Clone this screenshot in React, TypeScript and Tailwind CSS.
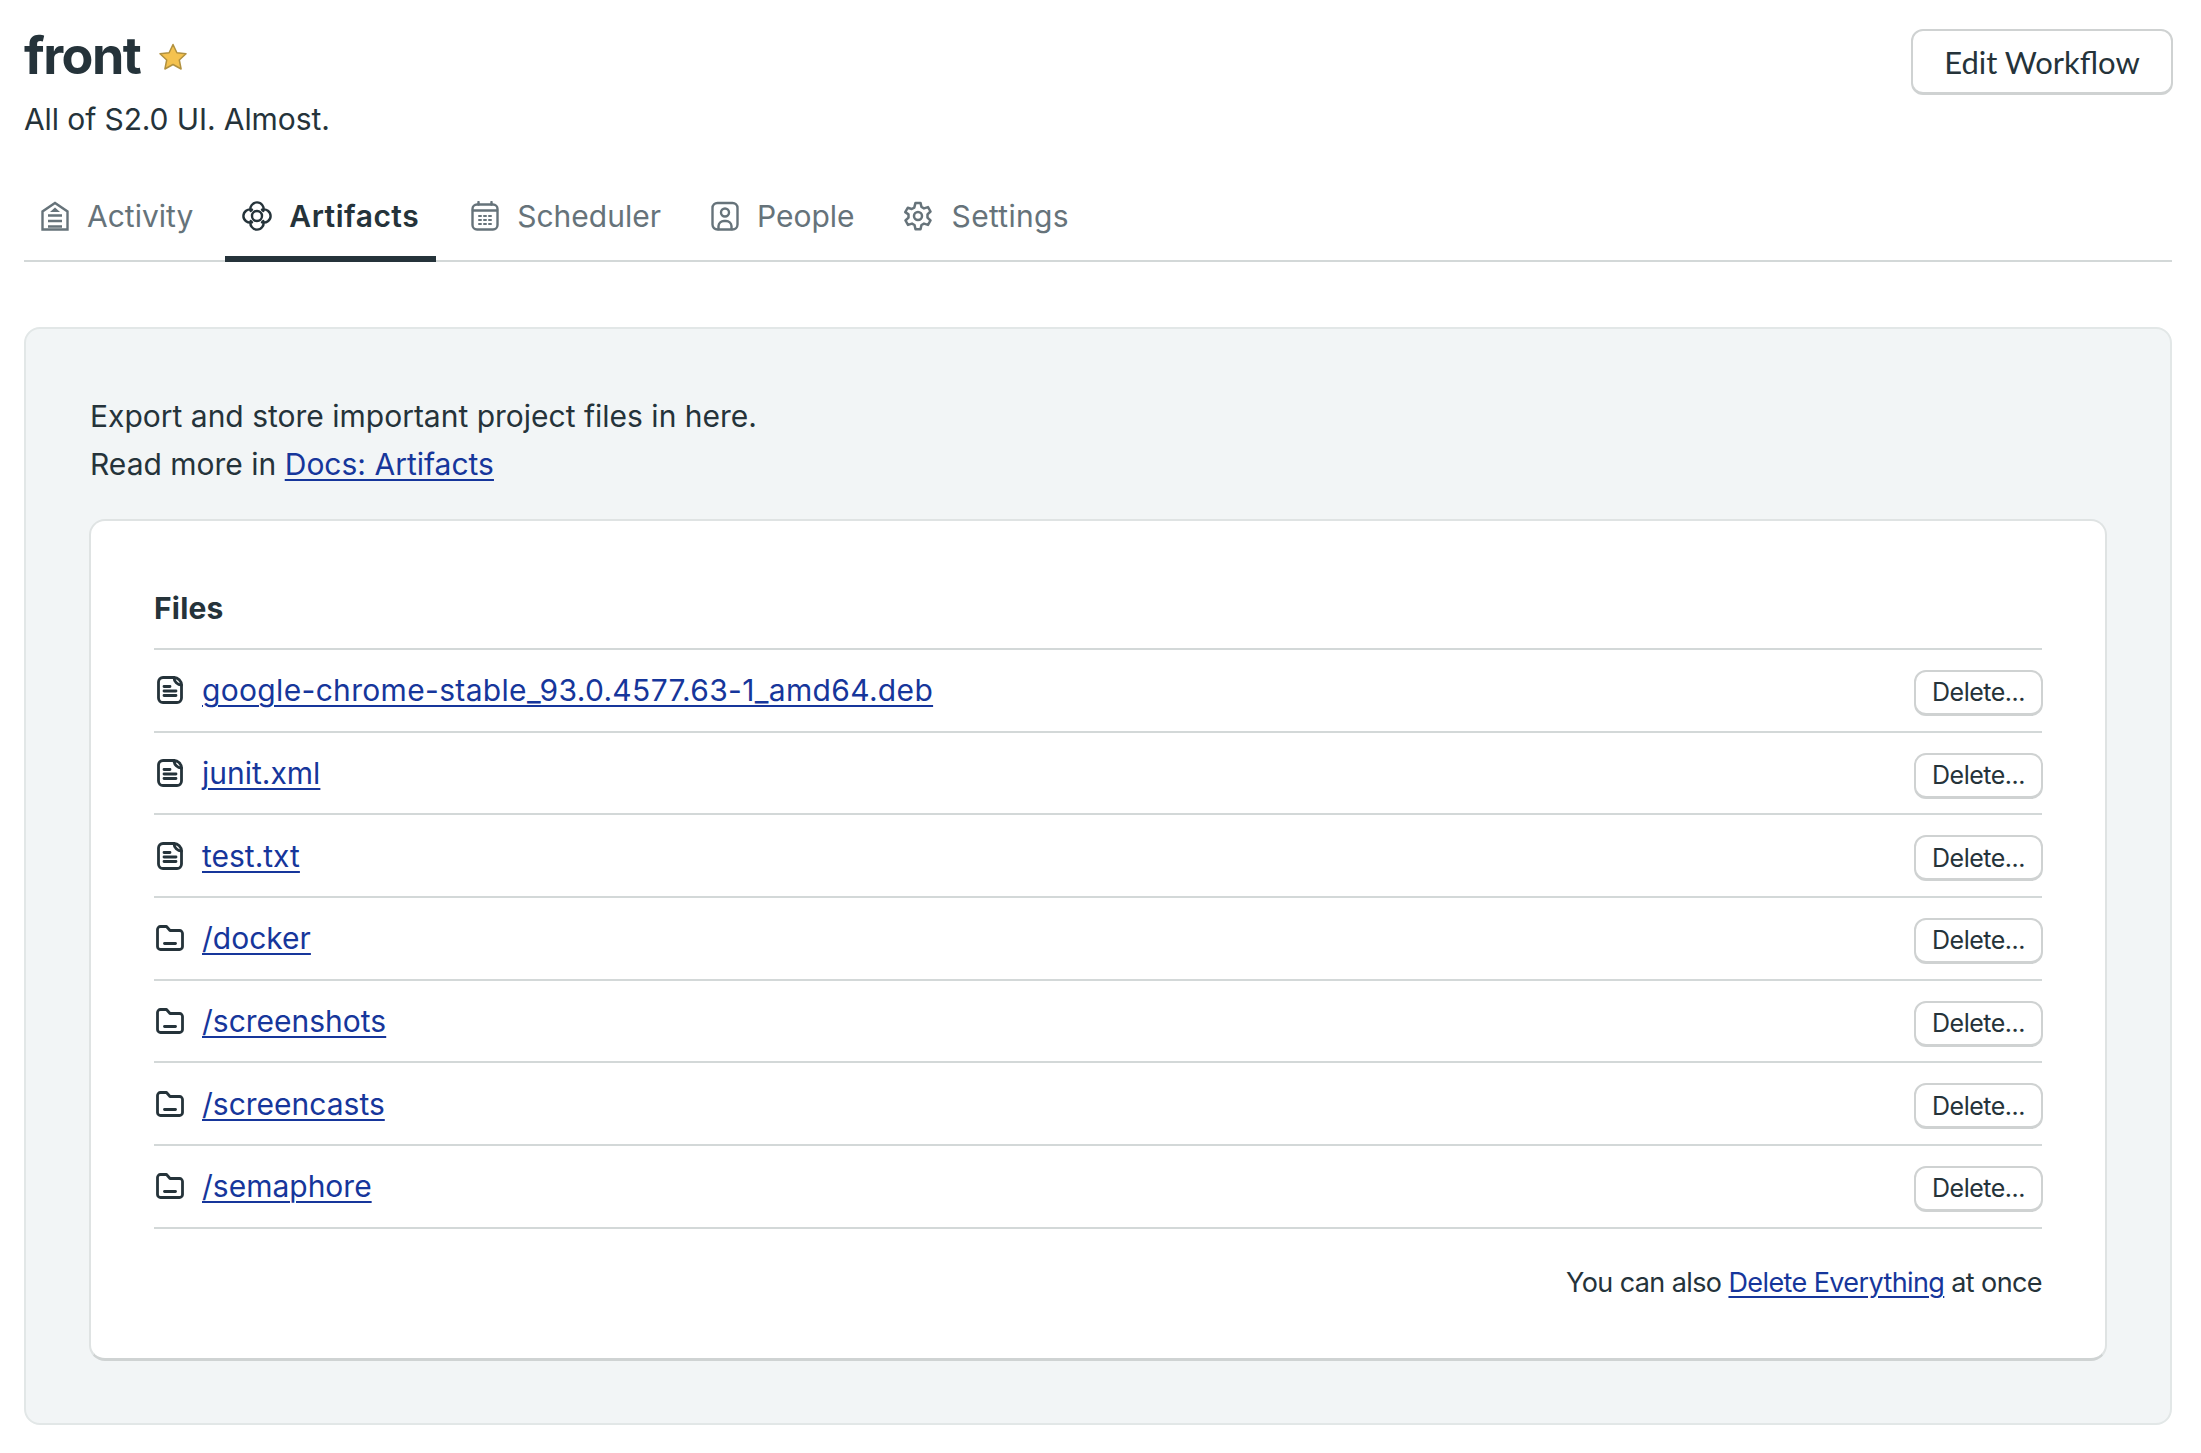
import { FC, ReactNode } from 'react';

const stroke = {
  fill: 'none',
  stroke: 'currentColor',
  strokeWidth: 2.4,
  strokeLinecap: 'round' as const,
  strokeLinejoin: 'round' as const,
};

const ActivityIcon = () => (
  <svg width="28" height="30" viewBox="0 0 28 30" {...stroke} strokeLinecap="butt" strokeLinejoin="miter">
    <path d="M1.500 28.500V10.500L14 2l12.500 8.500V28.500Z" />
    <path d="M7 14.500h14M7 20h14M7 25.500h14" />
    <path d="M14 6.500l5 4.500h-10Z" fill="currentColor" stroke="none" />
  </svg>
);

const ArtifactsIcon = () => (
  <svg width="30" height="30" viewBox="0 0 30 30" {...stroke}>
    <circle cx="15" cy="15" r="5" />
    <path d="M8.710 10a6.600 6.600 0 1 1 12.580 0M20 8.710a6.600 6.600 0 1 1 0 12.580M21.290 20a6.600 6.600 0 1 1-12.580 0M10 21.290a6.600 6.600 0 1 1 0-12.580" />
  </svg>
);

const SchedulerIcon = () => (
  <svg width="28" height="30" viewBox="0 0 28 30" {...stroke}>
    <rect x="1.500" y="3.500" width="25" height="25" rx="4.500" />
    <path d="M2 9.500h24M7.500 1v2.500M20.500 1v2.500" />
    <path d="M8 15h2M13 15h2M18 15h2M8 19h2M13 19h2M18 19h2M8 23h2M13 23h2M18 23h2" strokeWidth="2" />
  </svg>
);

const PeopleIcon = () => (
  <svg width="28" height="30" viewBox="0 0 28 30" {...stroke}>
    <rect x="1.500" y="2" width="25" height="26.500" rx="5" />
    <circle cx="14" cy="11.500" r="4" />
    <path d="M7.500 28v-3a5.500 5.500 0 0 1 5.500-5h2a5.500 5.500 0 0 1 5.500 5v3" />
  </svg>
);

const SettingsIcon = () => (
  <svg width="28" height="30" viewBox="1 1 22 24" {...stroke} strokeWidth="2">
    <circle cx="12" cy="13" r="3.200" />
    <path d="M10 2.500h4l.8 3.300 2 1.100 3.200-1 2 3.500-2.400 2.300v2.600l2.400 2.300-2 3.500-3.200-1-2 1.100-.8 3.300h-4l-.8-3.300-2-1.100-3.200 1-2-3.500 2.400-2.300v-2.600L1.800 9.900l2-3.500 3.200 1 2-1.100Z" />
  </svg>
);

const FileIcon = () => (
  <svg width="28" height="28" viewBox="0 0 28 28" {...stroke} strokeWidth="2.800">
    <path d="M18 1.500H7A4.500 4.500 0 0 0 2.500 6v16A4.500 4.500 0 0 0 7 26.500h14a4.500 4.500 0 0 0 4.500-4.500V9" />
    <path d="M18 1.500c4 0 7.500 3.500 7.500 7.500-4 0-7.500-3.500-7.500-7.500Z" />
    <path d="M8 10.500h6M8 15h12M8 19.500h12" />
  </svg>
);

const FolderIcon = () => (
  <svg width="28" height="28" viewBox="0 0 28 28" {...stroke} strokeWidth="2.800">
    <path d="M1.500 5.500a3 3 0 0 1 3-3h6l3.500 4h9.500a3 3 0 0 1 3 3v13a3 3 0 0 1-3 3h-19a3 3 0 0 1-3-3Z" />
    <path d="M8.500 19.500h11" />
  </svg>
);

const StarIcon = () => (
  <svg width="30" height="28" viewBox="0 0 30 28">
    <path
      d="M15 1.500l3.900 8.200 9.100 1.100-6.700 6.200 1.800 9-8.100-4.500-8.100 4.500 1.800-9L2 10.800l9.100-1.100Z"
      fill="#f4c24f"
      stroke="#b1913f"
      strokeWidth="1.500"
      strokeLinejoin="round"
    />
  </svg>
);

const tabBase = 'flex items-center px-[17px] pb-[16px] -mb-[2px] border-b-[6px]';
const tabIdle = 'border-transparent text-[#66737a]';

const tabs: { label: string; icon: ReactNode; className: string }[] = [
  { label: 'Activity', icon: <ActivityIcon />, className: `${tabIdle} gap-[18px]` },
  {
    label: 'Artifacts',
    icon: <ArtifactsIcon />,
    className: 'mr-[3px] gap-[17px] border-[#25333a] text-[#25333a] font-semibold tracking-[0.5px]',
  },
  { label: 'Scheduler', icon: <SchedulerIcon />, className: `${tabIdle} mr-[1px] gap-[18px]` },
  { label: 'People', icon: <PeopleIcon />, className: `${tabIdle} gap-[18px]` },
  { label: 'Settings', icon: <SettingsIcon />, className: `${tabIdle} gap-[20px] tracking-[0.3px]` },
];

const files: { name: string; folder?: boolean }[] = [
  { name: 'google-chrome-stable_93.0.4577.63-1_amd64.deb' },
  { name: 'junit.xml' },
  { name: 'test.txt' },
  { name: '/docker', folder: true },
  { name: '/screenshots', folder: true },
  { name: '/screencasts', folder: true },
  { name: '/semaphore', folder: true },
];

const DocLink: FC<{ children: ReactNode; className?: string }> = ({ children, className }) => (
  <a href="#" className={`text-[#16369b] underline underline-offset-[4px] decoration-2 ${className ?? ''}`}>
    {children}
  </a>
);

export default function App() {
  return (
    <div className="bg-white pl-6 pr-[29px] h-[1453px] overflow-hidden text-[#25333a] font-['Inter',sans-serif] text-[30px] leading-[48px]">
      <div className="flex justify-between items-start pt-[28px]">
        <div>
          <div className="flex items-center h-[56px] mb-[11px]">
            <h1 className="text-[52px] font-bold leading-[56px] tracking-[-1.5px]">front</h1>
            <span className="ml-[18px] mt-[2px]">
              <StarIcon />
            </span>
          </div>
          <p className="tracking-[-0.1px]">All of S2.0 UI. Almost.</p>
        </div>
        <button className="mt-[1px] -mr-[1px] h-[66px] w-[262px] rounded-[12px] border-2 border-[#cfd2d2] border-b-[3px] bg-white font-['Lato',sans-serif] text-[31px] text-[#25333a]">
          Edit Workflow
        </button>
      </div>

      <nav className="mt-[49px] flex gap-[15px] border-b-2 border-[#d3d8d8]">
        {tabs.map((tab) => (
          <a key={tab.label} href="#" className={`${tabBase} ${tab.className}`}>
            {tab.icon}
            {tab.label}
          </a>
        ))}
      </nav>

      <section className="mt-[65px] rounded-[16px] border-2 border-[#e2e7e7] bg-[#f2f5f6] px-[63px] pt-[63px] pb-[62px]">
        <p className="pl-[1px]">Export and store important project files in here.</p>
        <p className="pl-[1px]">
          Read more in <DocLink>Docs: Artifacts</DocLink>
        </p>

        <div className="mt-[31px] rounded-[16px] border-2 border-[#dfe3e3] border-b-[3px] border-b-[#cfd3d3] bg-white px-[63px] pt-[63px] pb-[51px]">
          <h2 className="font-bold tracking-[0.2px]">Files</h2>
          <ul className="mt-[16px] border-t-2 border-[#d3d8d8]">
            {files.map((file, i) => (
              <li
                key={file.name}
                className="flex h-[82.7px] items-center border-b-2 border-[#d3d8d8]"
              >
                <span className="ml-[2px] mr-[18px] text-[#25333a]">
                  {file.folder ? <FolderIcon /> : <FileIcon />}
                </span>
                <DocLink className={i === 0 ? 'tracking-[0.33px]' : ''}>{file.name}</DocLink>
                <button className="ml-auto -mr-[1px] mt-[5px] h-[46px] w-[129px] rounded-[12px] border-2 border-[#cfd2d2] border-b-[3px] bg-white pt-[1px] text-[25px] leading-none tracking-[-0.5px] text-[#25333a]">
                  Delete...
                </button>
              </li>
            ))}
          </ul>
          <p className="mt-[30px] text-right text-[27px] tracking-[-0.6px]">
            You can also <DocLink>Delete Everything</DocLink> at once
          </p>
        </div>
      </section>
    </div>
  );
}
